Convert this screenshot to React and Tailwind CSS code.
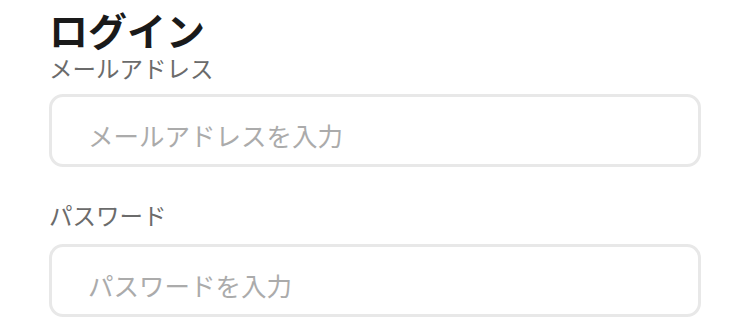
export default function App() {
  const font = { fontFamily: '"Noto Sans CJK JP", "Noto Sans", sans-serif' };
  return (
    <div className="w-[750px] h-[320px] bg-white overflow-hidden px-[49px] pt-[10px]" style={font}>
      <h1 className="text-[39px] leading-[38px] font-bold text-[#1a1a1a]">ログイン</h1>
      <form className="flex flex-col" onSubmit={(e) => e.preventDefault()}>
        <label className="mt-[8px] text-[23.5px] leading-[24px] text-[#6b6b6b]">メールアドレス</label>
        <input
          type="email"
          placeholder="メールアドレスを入力"
          className="mt-[14px] w-full h-[73px] box-border border-[3px] border-[#e8e8e8] rounded-[14px] pl-[36px] pt-[7px] text-[25.5px] text-[#333] placeholder:text-[#ababab] outline-none"
        />
        <label className="mt-[36px] text-[23.5px] leading-[24px] text-[#6b6b6b]">パスワード</label>
        <input
          type="password"
          placeholder="パスワードを入力"
          className="mt-[17px] w-full h-[73px] box-border border-[3px] border-[#e8e8e8] rounded-[14px] pl-[36px] pt-[7px] text-[25.5px] text-[#333] placeholder:text-[#ababab] outline-none"
        />
      </form>
    </div>
  );
}
